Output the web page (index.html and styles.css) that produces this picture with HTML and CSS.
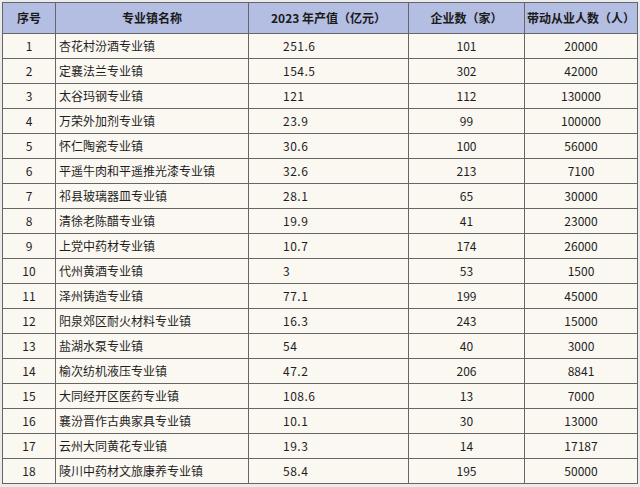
FILE: index.html
```html
<!DOCTYPE html>
<html lang="zh">
<head>
<meta charset="utf-8">
<link rel="stylesheet" href="styles.css">
</head>
<body>
<table class="tbl">
<colgroup>
<col class="c1"><col class="c2"><col class="c3"><col class="c4"><col class="c5">
</colgroup>
<thead>
<tr><th>序号</th><th>专业镇名称</th><th>2023 年产值（亿元）</th><th>企业数（家）</th><th>带动从业人数（人）</th></tr>
</thead>
<tbody>
<tr><td class="n">1</td><td class="name">杏花村汾酒专业镇</td><td class="val">251.6</td><td class="n">101</td><td class="n">20000</td></tr>
<tr><td class="n">2</td><td class="name">定襄法兰专业镇</td><td class="val">154.5</td><td class="n">302</td><td class="n">42000</td></tr>
<tr><td class="n">3</td><td class="name">太谷玛钢专业镇</td><td class="val">121</td><td class="n">112</td><td class="n">130000</td></tr>
<tr><td class="n">4</td><td class="name">万荣外加剂专业镇</td><td class="val">23.9</td><td class="n">99</td><td class="n">100000</td></tr>
<tr><td class="n">5</td><td class="name">怀仁陶瓷专业镇</td><td class="val">30.6</td><td class="n">100</td><td class="n">56000</td></tr>
<tr><td class="n">6</td><td class="name">平遥牛肉和平遥推光漆专业镇</td><td class="val">32.6</td><td class="n">213</td><td class="n">7100</td></tr>
<tr><td class="n">7</td><td class="name">祁县玻璃器皿专业镇</td><td class="val">28.1</td><td class="n">65</td><td class="n">30000</td></tr>
<tr><td class="n">8</td><td class="name">清徐老陈醋专业镇</td><td class="val">19.9</td><td class="n">41</td><td class="n">23000</td></tr>
<tr><td class="n">9</td><td class="name">上党中药材专业镇</td><td class="val">10.7</td><td class="n">174</td><td class="n">26000</td></tr>
<tr><td class="n">10</td><td class="name">代州黄酒专业镇</td><td class="val">3</td><td class="n">53</td><td class="n">1500</td></tr>
<tr><td class="n">11</td><td class="name">泽州铸造专业镇</td><td class="val">77.1</td><td class="n">199</td><td class="n">45000</td></tr>
<tr><td class="n">12</td><td class="name">阳泉郊区耐火材料专业镇</td><td class="val">16.3</td><td class="n">243</td><td class="n">15000</td></tr>
<tr><td class="n">13</td><td class="name">盐湖水泵专业镇</td><td class="val">54</td><td class="n">40</td><td class="n">3000</td></tr>
<tr><td class="n">14</td><td class="name">榆次纺机液压专业镇</td><td class="val">47.2</td><td class="n">206</td><td class="n">8841</td></tr>
<tr><td class="n">15</td><td class="name">大同经开区医药专业镇</td><td class="val">108.6</td><td class="n">13</td><td class="n">7000</td></tr>
<tr><td class="n">16</td><td class="name">襄汾晋作古典家具专业镇</td><td class="val">10.1</td><td class="n">30</td><td class="n">13000</td></tr>
<tr><td class="n">17</td><td class="name">云州大同黄花专业镇</td><td class="val">19.3</td><td class="n">14</td><td class="n">17187</td></tr>
<tr><td class="n">18</td><td class="name">陵川中药材文旅康养专业镇</td><td class="val">58.4</td><td class="n">195</td><td class="n">50000</td></tr>
</tbody>
</table>
</body>
</html>
```
FILE: styles.css
```css
html, body {
  margin: 0;
  padding: 0;
  background: #ebebeb;
}
body {
  padding: 2px 0 0 2px;
  font-family: "Noto Sans CJK SC", "Noto Sans", sans-serif;
  font-size: 12px;
  color: #1e1e1e;
}
.tbl {
  border-collapse: collapse;
  table-layout: fixed;
  width: 635px;
  background: #fbf8f2;
}
.c1 { width: 53px; }
.c2 { width: 193px; }
.c3 { width: 160px; }
.c4 { width: 116px; }
.c5 { width: 113px; }
.tbl th, .tbl td {
  border: 1px solid #666;
  padding: 0;
  line-height: 14px;
  white-space: nowrap;
  overflow: hidden;
}
.tbl th {
  background: #b4bde2;
  font-weight: bold;
  height: 30px;
  text-align: center;
  color: #1a1a1a;
}
.tbl td {
  height: 24px;
}
.tbl td.n { text-align: center; }
.tbl td.name { text-align: left; padding-left: 3px; }
.tbl td.val { text-align: left; padding-left: 34px; letter-spacing: 0.5px; }
```
